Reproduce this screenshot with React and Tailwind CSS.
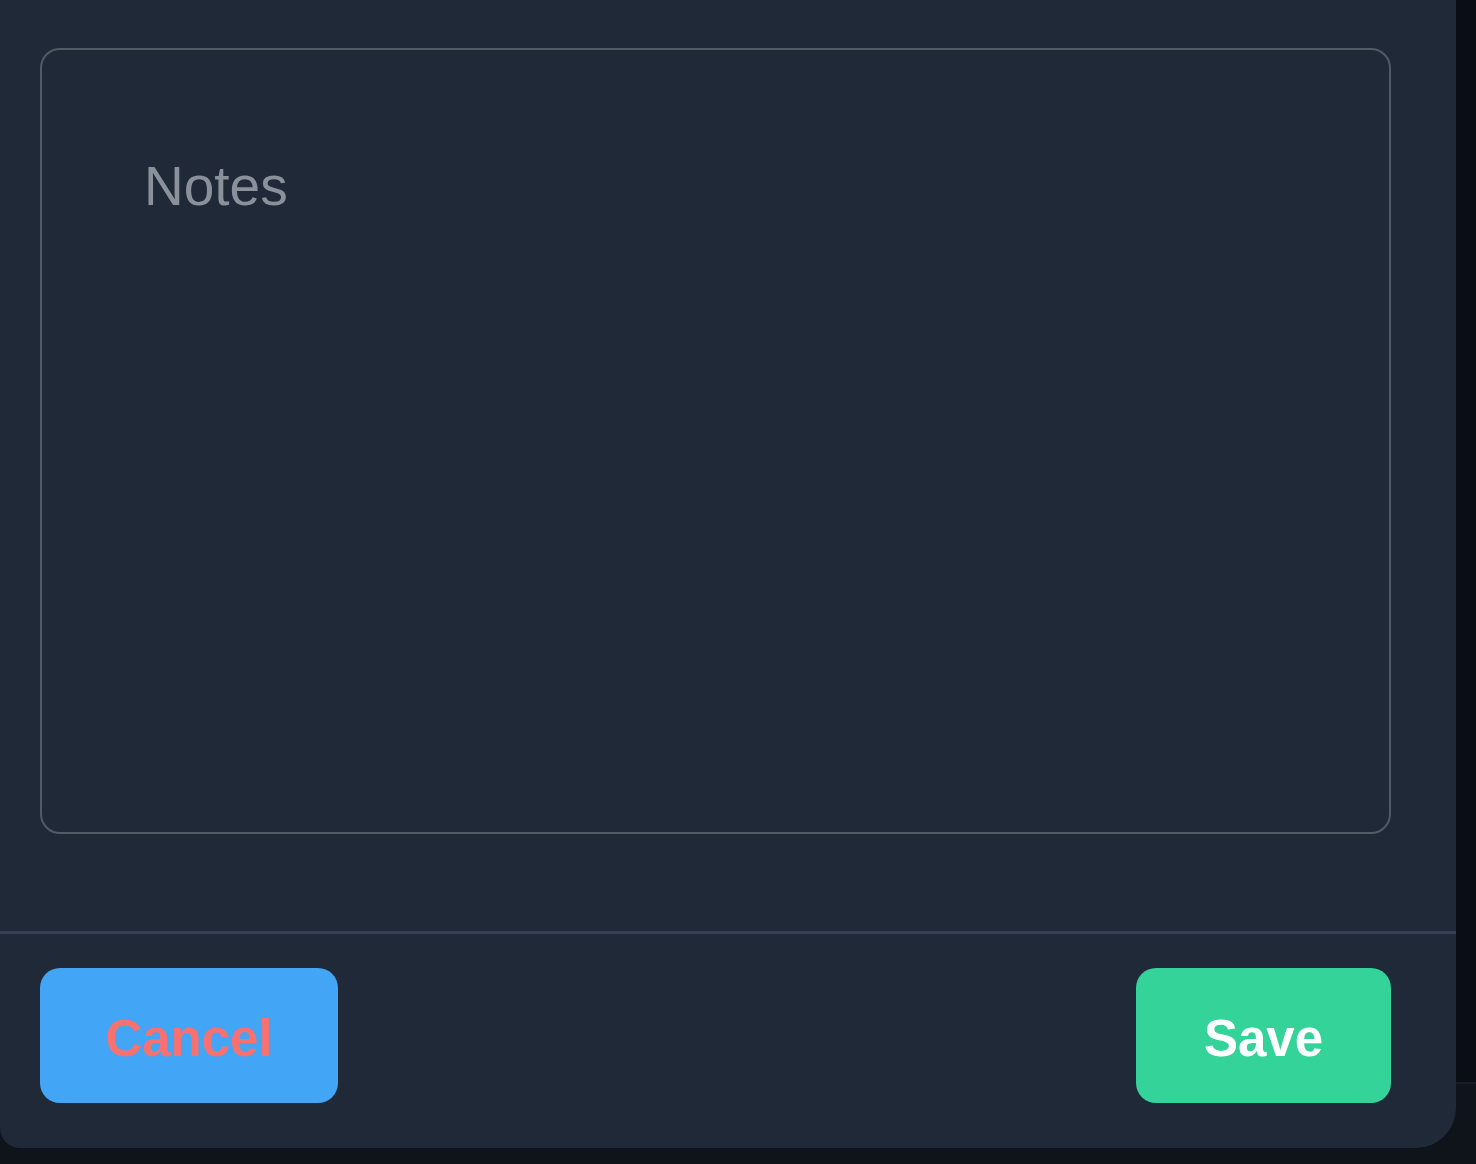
export default function App() {
  return (
    <div className="relative w-full h-[1164px] overflow-hidden bg-[#0f131a]" style={{ fontFamily: '"Liberation Sans", Arial, sans-serif' }}>
      {/* page behind the sheet */}
      <div className="h-[1084px] bg-[#0a0d13] border-b-2 border-[#181c24]" />

      {/* notes sheet */}
      <div className="absolute top-0 left-0 w-[1456px] h-[1148px] bg-[#1f2937] rounded-br-[40px] rounded-bl-[20px] flex flex-col">
        <div className="pt-[48px] pl-[40px] pr-[65px] pb-[97px]">
          <textarea
            placeholder="Notes"
            className="block w-full h-[786px] resize-none bg-transparent border-2 border-[#525a66] rounded-[20px] pt-[105px] pl-[102px] pr-[40px] text-[55px] leading-[1.15] text-gray-200 placeholder:text-[#8b919a] outline-none"
          />
        </div>

        <div className="h-[3px] bg-[#374151]" />

        <div className="flex items-center justify-between pl-[40px] pr-[65px] pt-[34px]">
          <button className="w-[298px] h-[135px] pt-[8px] rounded-[20px] bg-[#42a5f5] text-[#f87171] font-bold text-[51px]">
            Cancel
          </button>
          <button className="w-[255px] h-[135px] pt-[8px] rounded-[20px] bg-[#34d399] text-white font-bold text-[51px]">
            Save
          </button>
        </div>
      </div>
    </div>
  )
}
